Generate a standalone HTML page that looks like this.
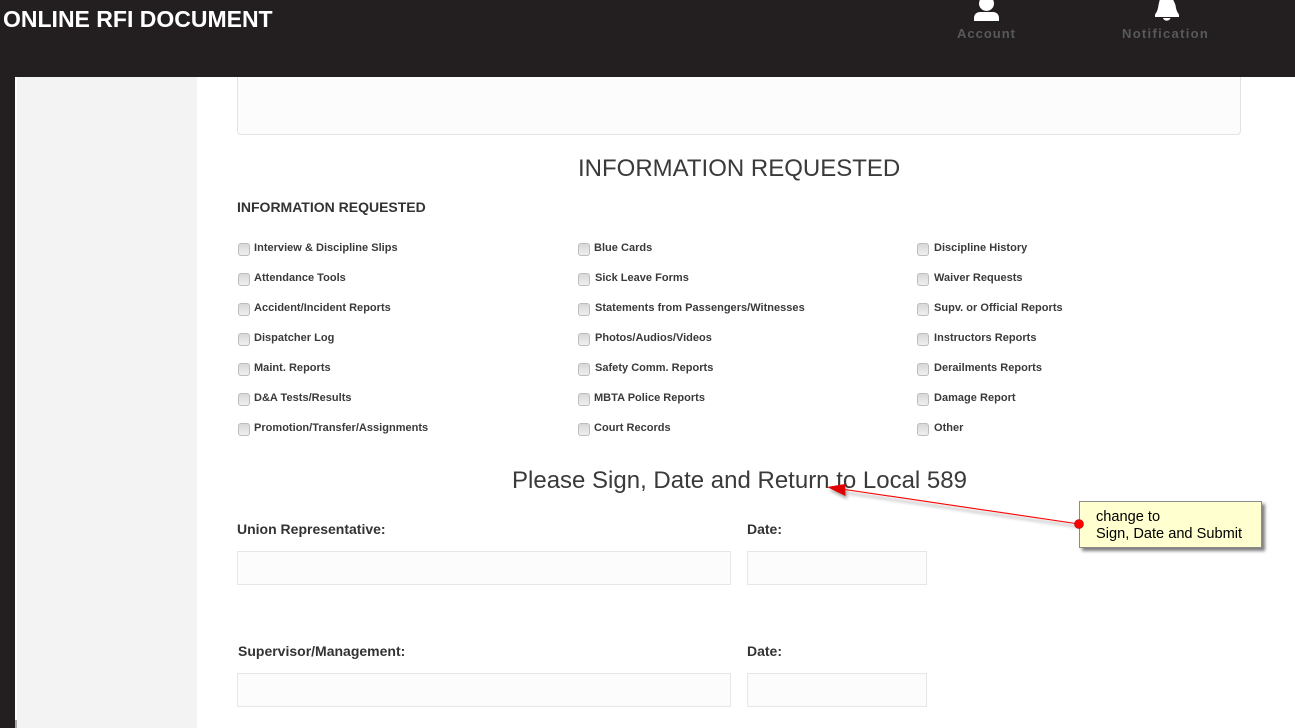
<!DOCTYPE html>
<html>
<head>
<meta charset="utf-8">
<style>
html,body{margin:0;padding:0;width:1295px;height:728px;overflow:hidden;background:#fff;font-family:"Liberation Sans",sans-serif;color:#333}
.a{position:absolute;white-space:nowrap}
.cb{position:absolute;width:10px;height:10.500px;border:1px solid #bdbdbd;border-radius:3px;background:linear-gradient(#d8d8d8,#efefef)}
.l{position:absolute;white-space:nowrap;font-size:11px;font-weight:bold;line-height:14px;color:#3a3a3a;letter-spacing:.02px}
.in{position:absolute;height:32px;border:1px solid #e6e6e6;background:#fcfcfc}
.h{position:absolute;white-space:nowrap;font-size:14px;font-weight:bold;line-height:16px;color:#333}
</style>
</head>
<body>
<div class="a" style="left:17px;top:77px;width:180px;height:651px;background:#f3f3f3"></div>
<div class="a" style="left:237px;top:70px;width:1002px;height:63px;border:1px solid #e3e3e3;border-radius:4px;background:#fcfcfc"></div>
<div class="a" style="left:0;top:0;width:1295px;height:77px;background:#231f20"></div>
<div class="a" style="left:0;top:77px;width:15px;height:651px;background:#231f20"></div>
<div class="a" style="left:15px;top:720px;width:2px;height:8px;background:#aaa"></div>

<div class="a" style="left:3px;top:5px;font-size:23px;line-height:28px;font-weight:bold;color:#fff">ONLINE RFI DOCUMENT</div>

<svg class="a" style="left:974px;top:0" width="25" height="22" viewBox="0 0 25 22"><circle cx="12.500" cy="3.500" r="7.500" fill="#fff"/><path d="M0 21V18C0 14.500 2.500 12 6 12H19C22.500 12 25 14.500 25 18V21Z" fill="#fff"/></svg>
<div class="a" style="left:957px;top:26px;font-size:13px;line-height:16px;color:#57595b;letter-spacing:1px;font-weight:bold">Account</div>
<svg class="a" style="left:1155px;top:0" width="24" height="22" viewBox="0 0 24 22"><path d="M3.500 5C4 2.500 4.500 0 5 0H18C18.500 0 19.500 2.500 20.500 5C21 9 22 12 24 14.500V17H0V14.500C2 12 3 9 3.500 5Z" fill="#fff"/><path d="M8 18H15.500C14.500 21.500 9 21.500 8 18Z" fill="#fff"/></svg>
<div class="a" style="left:1122px;top:26px;font-size:13px;line-height:16px;color:#57595b;letter-spacing:1.300px;font-weight:bold">Notification</div>

<div class="a" style="left:578px;top:155px;font-size:24px;line-height:28px;color:#3a3a3a">INFORMATION REQUESTED</div>
<div class="a" style="left:237px;top:199px;font-size:14px;line-height:16px;font-weight:bold;color:#333">INFORMATION REQUESTED</div>

<div class="cb" style="left:238px;top:243px"></div><div class="l" style="left:254px;top:241px">Interview &amp; Discipline Slips</div>
<div class="cb" style="left:238px;top:273px"></div><div class="l" style="left:254px;top:271px">Attendance Tools</div>
<div class="cb" style="left:238px;top:303px"></div><div class="l" style="left:254px;top:301px">Accident/Incident Reports</div>
<div class="cb" style="left:238px;top:333px"></div><div class="l" style="left:254px;top:331px">Dispatcher Log</div>
<div class="cb" style="left:238px;top:363px"></div><div class="l" style="left:254px;top:361px">Maint. Reports</div>
<div class="cb" style="left:238px;top:393px"></div><div class="l" style="left:254px;top:391px">D&amp;A Tests/Results</div>
<div class="cb" style="left:238px;top:423px"></div><div class="l" style="left:254px;top:421px">Promotion/Transfer/Assignments</div>

<div class="cb" style="left:578px;top:243px"></div><div class="l" style="left:594px;top:241px">Blue Cards</div>
<div class="cb" style="left:578px;top:273px"></div><div class="l" style="left:595px;top:271px">Sick Leave Forms</div>
<div class="cb" style="left:578px;top:303px"></div><div class="l" style="left:595px;top:301px">Statements from Passengers/Witnesses</div>
<div class="cb" style="left:578px;top:333px"></div><div class="l" style="left:595px;top:331px">Photos/Audios/Videos</div>
<div class="cb" style="left:578px;top:363px"></div><div class="l" style="left:595px;top:361px">Safety Comm. Reports</div>
<div class="cb" style="left:578px;top:393px"></div><div class="l" style="left:594px;top:391px">MBTA Police Reports</div>
<div class="cb" style="left:578px;top:423px"></div><div class="l" style="left:594px;top:421px">Court Records</div>

<div class="cb" style="left:917px;top:243px"></div><div class="l" style="left:934px;top:241px">Discipline History</div>
<div class="cb" style="left:917px;top:273px"></div><div class="l" style="left:934px;top:271px">Waiver Requests</div>
<div class="cb" style="left:917px;top:303px"></div><div class="l" style="left:934px;top:301px">Supv. or Official Reports</div>
<div class="cb" style="left:917px;top:333px"></div><div class="l" style="left:934px;top:331px">Instructors Reports</div>
<div class="cb" style="left:917px;top:363px"></div><div class="l" style="left:934px;top:361px">Derailments Reports</div>
<div class="cb" style="left:917px;top:393px"></div><div class="l" style="left:934px;top:391px">Damage Report</div>
<div class="cb" style="left:917px;top:423px"></div><div class="l" style="left:934px;top:421px">Other</div>

<div class="a" style="left:512px;top:467px;font-size:24px;line-height:28px;color:#3a3a3a">Please Sign, Date and Return to Local 589</div>

<div class="h" style="left:237px;top:521px">Union Representative:</div>
<div class="h" style="left:747px;top:521px">Date:</div>
<div class="in" style="left:237px;top:551px;width:492px"></div>
<div class="in" style="left:747px;top:551px;width:178px"></div>
<div class="h" style="left:238px;top:643px">Supervisor/Management:</div>
<div class="h" style="left:747px;top:643px">Date:</div>
<div class="in" style="left:237px;top:673px;width:492px"></div>
<div class="in" style="left:747px;top:673px;width:178px"></div>

<div class="a" style="left:1079px;top:501px;width:181px;height:45px;background:#ffffcf;border:1px solid #8a8a8a;box-shadow:3px 3px 3px rgba(0,0,0,.5)"></div>
<div class="a" style="left:1096px;top:509px;font-size:14.600px;line-height:17px;color:#000">change to<br>Sign, Date and Submit</div>
<svg class="a" style="left:820px;top:475px" width="270" height="60" viewBox="820 475 270 60">
<g style="filter:blur(1.500px)" opacity=".35" transform="translate(2 3)">
<path d="M1079 524L845 490" stroke="#000" stroke-width="1.500"/>
<path d="M827 487L845 484L845 496Z" fill="#000"/>
</g>
<path d="M1079 524L845 489.500" stroke="#f00" stroke-width="1.100"/>
<path d="M827 487L845 484L845.500 496Z" fill="#e00000"/>
<circle cx="1079" cy="524" r="4.500" fill="#f00" stroke="#b00000" stroke-width=".6"/>
</svg>
</body>
</html>
